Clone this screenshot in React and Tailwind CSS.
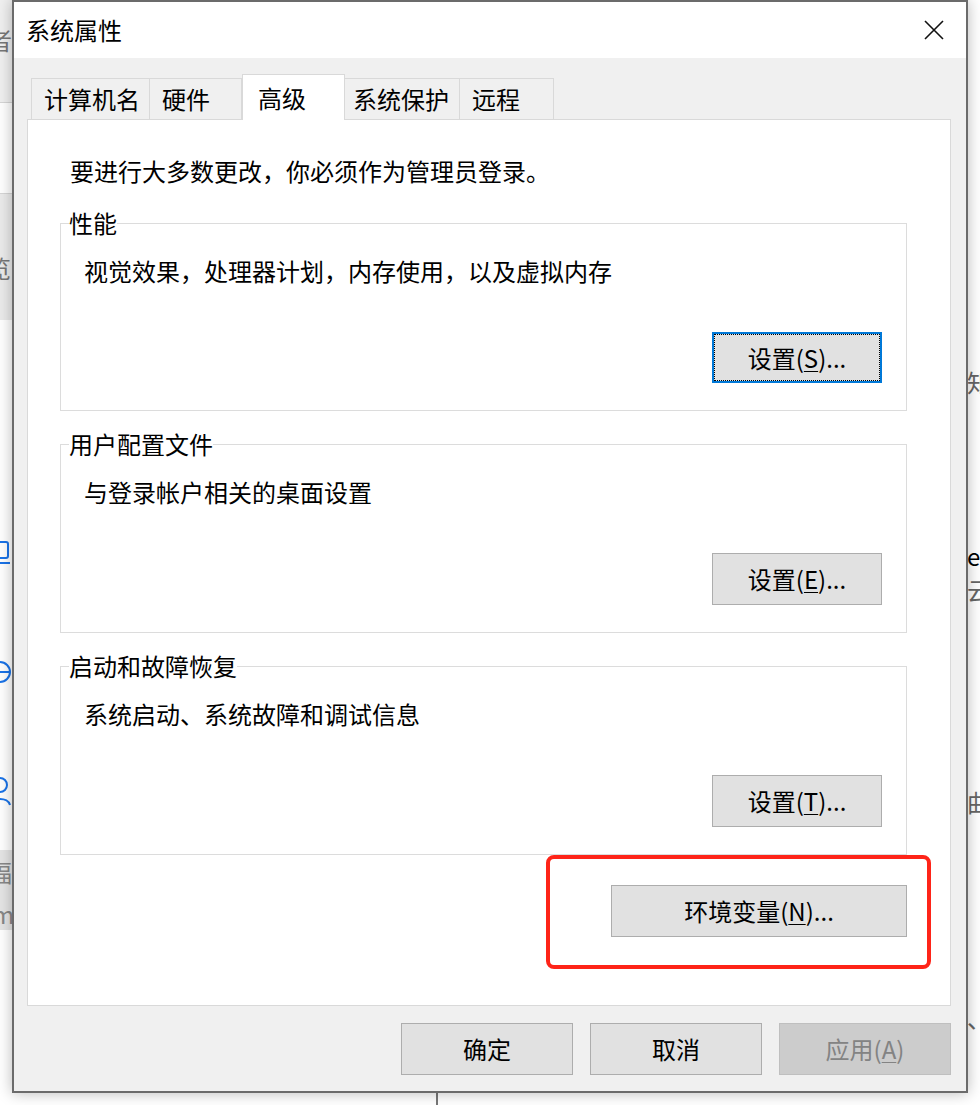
const font = "font-['Noto_Sans_CJK_SC','Noto_Sans_CJK_JP',sans-serif]"

function Mn({ children }) {
  return <span className="underline decoration-1 underline-offset-[3px]">{children}</span>
}

function Btn({ children, className = '', focused, disabled }) {
  const look = disabled
    ? 'bg-[#cccccc] border border-[#bfbfbf] text-[#838383]'
    : focused
    ? 'bg-[#e1e1e1] border-2 border-[#0078d7] text-black'
    : 'bg-[#e1e1e1] border border-[#adadad] text-black'
  return (
    <button
      type="button"
      className={`relative flex items-center justify-center text-[24px] leading-none ${look} ${className}`}
    >
      {focused && <span className="absolute inset-0 border border-dotted border-black" />}
      <span className="relative">{children}</span>
    </button>
  )
}

function Group({ title, text, children }) {
  return (
    <fieldset className="border border-[#dcdcdc] pl-[23px] pr-[24px] pb-[27px]">
      <legend className="-ml-[15px] p-0 text-[24px] leading-[32px]">{title}</legend>
      <div className="mt-[16px] text-[24px] leading-[32px]">{text}</div>
      <div className="mt-[45px] flex justify-end">{children}</div>
    </fieldset>
  )
}

export default function App() {
  const tabs = [
    { label: '计算机名', w: 'w-[119px] pl-[12px]' },
    { label: '硬件', w: 'w-[93px] pl-[12px]' },
    { label: '高级', w: 'w-[103px] pl-[15px]', active: true },
    { label: '系统保护', w: 'w-[116px] pl-[8px]' },
    { label: '远程', w: 'w-[95px] pl-[12px]' },
  ]

  return (
    <div className={`relative w-[980px] h-[1105px] overflow-hidden bg-white pl-[12px] ${font}`}>
      {/* desktop behind the window */}
      <div className="absolute left-0 top-0 w-[12px] h-[103px] bg-[#f0f0f0] border-b border-[#d6d6d6]" />
      <div className="absolute left-[-12px] top-[28px] text-[24px] leading-none text-[#777]">者</div>
      <div className="absolute left-0 top-[193px] w-[12px] h-[127px] bg-[#ebebeb] border-t border-[#d6d6d6]" />
      <div className="absolute left-[-13px] top-[256px] text-[24px] leading-none text-[#777]">览</div>
      <svg className="absolute left-[-10px] top-[540px]" width="20" height="26" viewBox="0 0 20 26" fill="none" stroke="#1a73e8" strokeWidth="2">
        <rect x="2" y="2" width="16" height="16" rx="2" />
        <path d="M4 23h16" />
      </svg>
      <svg className="absolute left-[-12px] top-[660px]" width="24" height="24" viewBox="0 0 24 24" fill="none" stroke="#1a73e8" strokeWidth="2">
        <circle cx="12" cy="12" r="10" />
        <path d="M2 12h20" />
      </svg>
      <svg className="absolute left-[-12px] top-[776px]" width="24" height="30" viewBox="0 0 24 30" fill="none" stroke="#1a73e8" strokeWidth="2">
        <circle cx="12" cy="9" r="7" />
        <path d="M2 29c2-8 18-8 20 0" />
      </svg>
      <div className="absolute left-0 top-[850px] w-[12px] h-[80px] bg-[#e5e5e5]" />
      <div className="absolute left-[-12px] top-[860px] text-[24px] leading-none text-[#888]">福</div>
      <div className="absolute left-[-8px] top-[902px] text-[24px] leading-none text-[#888]">m</div>
      <div className="absolute left-[967px] top-[370px] text-[24px] leading-none text-[#666]">知</div>
      <div className="absolute left-[967px] top-[544px] text-[24px] leading-none text-black">e</div>
      <div className="absolute left-[967px] top-[578px] text-[24px] leading-none text-[#666]">云</div>
      <div className="absolute left-[967px] top-[790px] text-[24px] leading-none text-[#666]">曲</div>
      <div className="absolute left-[967px] top-[1006px] text-[24px] leading-none text-[#666]">、</div>
      <div className="absolute left-[436px] top-[1090px] w-[2px] h-[20px] bg-[#777]" />

      {/* window */}
      <div className="relative z-10 flex flex-col w-[956px] h-[1093px] border-2 border-[#6b6b6b] bg-[#f0f0f0] shadow-[0_0_14px_rgba(0,0,0,0.28)]">
        <div className="flex items-center justify-between h-[56px] bg-white pl-[12px] pr-[22px]">
          <span className="text-[24px] leading-none text-black">系统属性</span>
          <svg width="20" height="20" viewBox="0 0 20 20" stroke="#111" strokeWidth="1.6">
            <path d="M1 1L19 19M19 1L1 19" />
          </svg>
        </div>

        <div className="flex-1 pt-[16px] pl-[13px] pr-[15px]">
          <div className="relative z-10 flex items-end h-[45px] pl-[4px]">
            {tabs.map((t) =>
              t.active ? (
                <div
                  key={t.label}
                  className={`flex items-center h-[46px] -mb-px bg-white border border-b-0 border-[#d9d9d9] text-[24px] leading-none ${t.w}`}
                >
                  {t.label}
                </div>
              ) : (
                <div
                  key={t.label}
                  className={`flex items-center h-[41px] -ml-px first:ml-0 bg-[#f0f0f0] border border-b-0 border-[#d9d9d9] text-[24px] leading-none ${t.w}`}
                >
                  {t.label}
                </div>
              )
            )}
          </div>

          <div className="h-[887px] bg-white border border-[#d9d9d9] pl-[32px] pr-[43px] pt-[35px]">
            <div className="text-[24px] leading-[32px] pl-[10px]">要进行大多数更改，你必须作为管理员登录。</div>

            <div className="mt-[20px]">
              <Group title="性能" text="视觉效果，处理器计划，内存使用，以及虚拟内存">
                <Btn focused className="w-[170px] h-[51px]">
                  设置(<Mn>S</Mn>)...
                </Btn>
              </Group>
            </div>
            <div className="mt-[17px]">
              <Group title="用户配置文件" text="与登录帐户相关的桌面设置">
                <Btn className="w-[170px] h-[52px]">
                  设置(<Mn>E</Mn>)...
                </Btn>
              </Group>
            </div>
            <div className="mt-[17px]">
              <Group title="启动和故障恢复" text="系统启动、系统故障和调试信息">
                <Btn className="w-[170px] h-[52px]">
                  设置(<Mn>T</Mn>)...
                </Btn>
              </Group>
            </div>

            <div className="mt-[30px] flex justify-end">
              <Btn className="w-[296px] h-[52px]">
                环境变量(<Mn>N</Mn>)...
              </Btn>
            </div>
          </div>

          <div className="mt-[17px] flex justify-end gap-[17px]">
            <Btn className="w-[172px] h-[52px]">确定</Btn>
            <Btn className="w-[172px] h-[52px]">取消</Btn>
            <Btn disabled className="w-[172px] h-[52px]">
              应用(<Mn>A</Mn>)
            </Btn>
          </div>
        </div>
      </div>

      {/* annotation */}
      <div className="absolute z-20 left-[546px] top-[855px] w-[385px] h-[114px] border-[4px] border-[#fe2418] rounded-[8px]" />
    </div>
  )
}
